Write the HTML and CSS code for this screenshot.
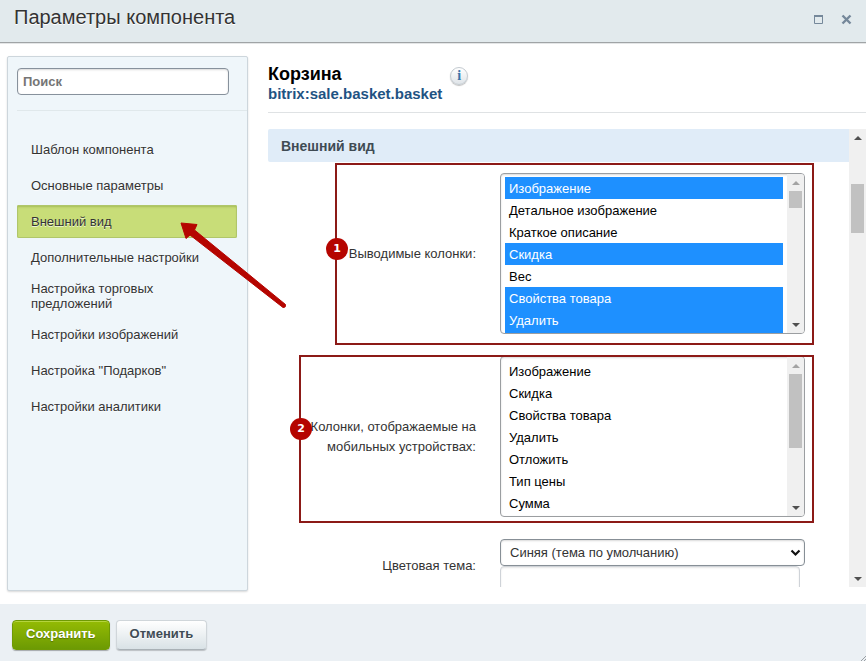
FILE: index.html
```
<!DOCTYPE html>
<html lang="ru">
<head>
    <meta charset="UTF-8">
    <meta name="viewport" content="width=device-width, initial-scale=1.0">
    <title>Параметры компонента</title>
    <link rel="stylesheet" href="styles.css">
</head>
<body>
    <div class="dialog">
        <header class="dialog-header">
            <h1>Параметры компонента</h1>
            <div class="window-controls">
                <button type="button" aria-label="Развернуть">
                    <svg width="11" height="11" viewBox="0 0 11 11"><path d="M1.5 1.5h8v8h-8z" fill="none" stroke="#75889a"/><path d="M1 1h9v2H1z" fill="#75889a"/></svg>
                </button>
                <button type="button" aria-label="Закрыть">
                    <svg width="11" height="11" viewBox="0 0 11 11"><path d="M1.5 1.5l8 8M9.5 1.5l-8 8" stroke="#75889a" stroke-width="2.4"/></svg>
                </button>
            </div>
        </header>

        <div class="dialog-body">
            <aside class="sidebar">
                <div class="search">
                    <input type="text" placeholder="Поиск" aria-label="Поиск">
                </div>
                <nav class="menu">
                    <a href="#">Шаблон компонента</a>
                    <a href="#">Основные параметры</a>
                    <a href="#" class="active">Внешний вид
                        <svg class="arrow" width="110" height="90" viewBox="0 0 110 90"><path d="M1 1L17 2.500 14.500 8 105.500 82.500Q106 86 103 85.500L10 13 6 16.500Z" fill="#b50500" stroke="#b50500" stroke-width="1" stroke-linejoin="round"/></svg>
                    </a>
                    <a href="#">Дополнительные настройки</a>
                    <a href="#">Настройка торговых предложений</a>
                    <a href="#">Настройки изображений</a>
                    <a href="#">Настройка "Подарков"</a>
                    <a href="#">Настройки аналитики</a>
                </nav>
            </aside>

            <main class="content">
                <div class="component-info">
                    <div>
                        <h2>Корзина</h2>
                        <p>bitrix:sale.basket.basket</p>
                    </div>
                    <button type="button" class="info-btn" aria-label="Справка">i</button>
                </div>

                <div class="scroll-area">
                    <form class="params">
                        <h3>Внешний вид</h3>

                        <div class="param">
                            <label for="columns">Выводимые колонки:</label>
                            <div class="listbox">
                                <select id="columns" multiple>
                                    <option selected>Изображение</option>
                                    <option>Детальное изображение</option>
                                    <option>Краткое описание</option>
                                    <option selected>Скидка</option>
                                    <option>Вес</option>
                                    <option selected>Свойства товара</option>
                                    <option selected>Удалить</option>
                                    <option selected>Отложить</option>
                                </select>
                                <div class="scrollbar">
                                    <i class="up off"></i>
                                    <div class="track"><b class="thumb short"></b></div>
                                    <i class="down"></i>
                                </div>
                            </div>
                            <div class="callout first"><span>1</span></div>
                        </div>

                        <div class="param">
                            <label for="mobile-columns">Колонки, отображаемые на мобильных устройствах:</label>
                            <div class="listbox">
                                <select id="mobile-columns" multiple>
                                    <option>Изображение</option>
                                    <option>Скидка</option>
                                    <option>Свойства товара</option>
                                    <option>Удалить</option>
                                    <option>Отложить</option>
                                    <option>Тип цены</option>
                                    <option>Сумма</option>
                                </select>
                                <div class="scrollbar">
                                    <i class="up off"></i>
                                    <div class="track"><b class="thumb long"></b></div>
                                    <i class="down"></i>
                                </div>
                            </div>
                            <div class="callout second"><span>2</span></div>
                        </div>

                        <div class="param">
                            <label for="theme">Цветовая тема:</label>
                            <div class="theme">
                                <div class="dropdown">
                                    <select id="theme">
                                        <option>Синяя (тема по умолчанию)</option>
                                    </select>
                                    <svg width="11" height="8" viewBox="0 0 11 8"><path d="M1.500 1.500l4 4 4-4" fill="none" stroke="#111" stroke-width="2.200"/></svg>
                                </div>
                                <input type="text" aria-label="Другая тема">
                            </div>
                        </div>
                    </form>
                    <div class="scrollbar">
                        <i class="up"></i>
                        <div class="track"><b class="thumb page"></b></div>
                        <i class="down"></i>
                    </div>
                </div>
            </main>
        </div>

        <footer class="dialog-footer">
            <button type="button" class="btn btn-save">Сохранить</button>
            <button type="button" class="btn btn-cancel">Отменить</button>
            <svg class="grip" width="5" height="5" viewBox="0 0 5 5"><path d="M0 5L5 0M3 5L5 3" stroke="#9a9fa3"/></svg>
        </footer>
    </div>
</body>
</html>
```
FILE: styles.css
```
* {
    box-sizing: border-box;
    margin: 0;
    padding: 0;
}

body {
    font-family: "Liberation Sans", Arial, sans-serif;
    font-size: 13px;
    color: #333;
    background: white;
}

button, input, select {
    font: inherit;
    color: inherit;
}

.dialog {
    display: flex;
    flex-direction: column;
    height: 100vh;
}

/* Header */
.dialog-header {
    display: flex;
    justify-content: space-between;
    height: 43px;
    padding: 5px 14px 0;
    background: #e2eaed;
    border-bottom: 1px solid #a0a4a6;
    box-shadow: 0 1px 0 #e4e6e7;
}

.dialog-header h1 {
    font-size: 20px;
    font-weight: normal;
    line-height: 24px;
    text-shadow: 0 1px 0 white;
}

.window-controls {
    display: flex;
    align-items: flex-start;
    gap: 17px;
    padding-top: 9px;
}

.window-controls button {
    width: 11px;
    height: 11px;
    border: none;
    background: none;
}

.window-controls svg {
    display: block;
}

.dialog-body {
    display: flex;
    flex: 1;
    gap: 20px;
    min-height: 0;
    padding: 13px 0 13px 7px;
}

/* Sidebar */
.sidebar {
    flex: none;
    width: 241px;
    padding-left: 9px;
    background: #eff6fa;
    border: 1px solid #cdd6dc;
    border-radius: 2px;
    box-shadow: 0 1px 2px rgba(0, 0, 0, 0.15);
}

.search {
    padding: 11px 18px 15px 0;
    border-bottom: 1px solid #e0e8eb;
}

.search input {
    display: block;
    width: 100%;
    height: 27px;
    padding: 0 5px;
    background: white;
    border: 1px solid #87919c;
    border-radius: 4px;
    box-shadow: inset 0 1px 2px rgba(0, 0, 0, 0.15);
    font-weight: bold;
}

.search input::placeholder {
    color: #757575;
    opacity: 1;
}

.menu {
    display: flex;
    flex-direction: column;
    gap: 3px;
    padding: 22px 10px 0 0;
}

.menu a {
    position: relative;
    display: flex;
    align-items: center;
    min-height: 33px;
    padding: 4px 14px;
    border-radius: 2px;
    color: #333;
    line-height: 15px;
    text-decoration: none;
    text-shadow: 0 1px 0 rgba(255, 255, 255, 0.7);
}

.menu a.active {
    background: #c8dd78;
    box-shadow: inset 0 0 0 1px #b0c66a, inset 0 2px 2px rgba(90, 120, 20, 0.3);
}

.arrow {
    position: absolute;
    left: 163px;
    top: 17px;
    z-index: 5;
}

/* Content */
.content {
    display: flex;
    flex: 1;
    flex-direction: column;
    min-width: 0;
    margin-bottom: 4px;
}

.component-info {
    display: flex;
    align-items: flex-start;
    gap: 8px;
    height: 57px;
    padding-top: 8px;
    border-bottom: 1px solid #dfe2e4;
}

.component-info h2 {
    color: black;
    font-size: 18px;
    line-height: 20px;
}

.component-info p {
    color: #1f5383;
    font-size: 15px;
    font-weight: bold;
    line-height: 20px;
}

.info-btn {
    width: 18px;
    height: 18px;
    margin-top: 3px;
    border: 1px solid #c3cad0;
    border-radius: 50%;
    background: linear-gradient(white, #dfe4e8);
    box-shadow: 0 1px 1px rgba(0, 0, 0, 0.25);
    color: #3a73a8;
    font-family: "Liberation Serif", serif;
    font-size: 14px;
    font-weight: bold;
    line-height: 14px;
}

.scroll-area {
    display: flex;
    flex: 1;
    min-height: 0;
    margin-top: 16px;
    overflow: hidden;
}

.params {
    display: flex;
    flex: 1;
    flex-direction: column;
    gap: 22px;
}

.params h3 {
    margin-bottom: -11px;
    padding: 1px 0 0 13px;
    background: #e0ecf8;
    border-radius: 2px 0 0 2px;
    color: #3f4b54;
    font-size: 14px;
    line-height: 32px;
}

.param {
    position: relative;
    display: grid;
    grid-template-columns: 208px 1fr;
    align-items: center;
    gap: 24px;
    padding-right: 44px;
}

.param label {
    line-height: 20px;
    text-align: right;
}

.listbox {
    display: flex;
    height: 161px;
    border: 1px solid #9b9ea1;
    border-radius: 4px;
    box-shadow: inset 0 1px 2px rgba(0, 0, 0, 0.15);
    overflow: hidden;
}

.listbox select {
    flex: 1;
    min-width: 0;
    padding: 3px 4px;
    background: none;
    border: none;
    outline: none;
    color: black;
    scrollbar-width: none;
}

.listbox option {
    height: 22px;
    padding: 4px 4px 0;
}

.listbox option:checked {
    background: #1e90ff linear-gradient(#1e90ff, #1e90ff);
    color: white;
}

.theme input {
    display: block;
    width: calc(100% - 5px);
    height: 27px;
    border: 1px solid #cfd3d8;
    border-radius: 4px;
    box-shadow: inset 0 1px 2px rgba(0, 0, 0, 0.1);
}

.dropdown {
    position: relative;
}

.dropdown select {
    display: block;
    width: 100%;
    height: 27px;
    padding: 0 24px 0 9px;
    appearance: none;
    background: white;
    border: 1px solid #878f96;
    border-radius: 4px;
    box-shadow: inset 0 1px 2px rgba(0, 0, 0, 0.15);
}

.dropdown svg {
    position: absolute;
    right: 4px;
    top: 10px;
    pointer-events: none;
}

/* Scrollbars */
.scrollbar {
    display: flex;
    flex: none;
    flex-direction: column;
    width: 17px;
    background: #f0f0f0;
}

.scrollbar i {
    display: flex;
    flex: none;
    align-items: center;
    justify-content: center;
    height: 17px;
}

.scrollbar i::before {
    content: "";
    border: 4px solid transparent;
}

.scrollbar .up::before {
    border-top-width: 0;
    border-bottom-color: #505050;
}

.scrollbar .down::before {
    border-bottom-width: 0;
    border-top-color: #505050;
}

.scrollbar .off::before {
    border-bottom-color: #a3a3a3;
}

.track {
    flex: 1;
    padding: 0 2px;
}

.thumb {
    display: block;
    background: #c1c1c1;
}

.thumb.short {
    height: 17px;
}

.thumb.long {
    height: 74px;
}

.thumb.page {
    height: 49px;
    margin-top: 38px;
}

/* Numbered callouts over the form */
.callout {
    position: absolute;
    right: 35px;
    border: 2px solid #8c1a17;
    pointer-events: none;
}

.callout.first {
    left: 67px;
    top: -10px;
    bottom: -11px;
}

.callout.second {
    left: 31px;
    top: -1px;
    bottom: -6px;
}

.callout span {
    position: absolute;
    left: -11px;
    top: 73px;
    width: 22px;
    height: 22px;
    border-radius: 50%;
    background: #b50500;
    color: white;
    font-family: "DejaVu Sans", sans-serif;
    font-size: 11px;
    font-weight: bold;
    line-height: 22px;
    text-align: center;
}

.callout.second span {
    top: 61px;
}

/* Footer */
.dialog-footer {
    position: relative;
    display: flex;
    gap: 6px;
    padding: 16px 12px 11px;
    background: #ebf0f4;
}

.btn {
    height: 30px;
    padding: 0 13px 3px;
    border-radius: 4px;
    font-weight: bold;
}

.btn-save {
    border: 1px solid #6f9a04;
    background: linear-gradient(#94bb03, #6c9a03);
    box-shadow: inset 0 1px 0 #b5d43c, 0 1px 1px rgba(0, 0, 0, 0.3);
    color: white;
    text-shadow: 0 1px 1px rgba(0, 0, 0, 0.3);
}

.btn-cancel {
    border: 1px solid #d0d6da;
    border-bottom-color: #a9b1b6;
    background: linear-gradient(white, #d9e2e6);
    box-shadow: 0 1px 1px rgba(0, 0, 0, 0.2);
    color: #3f4b54;
    text-shadow: 0 1px 0 white;
}

.grip {
    position: absolute;
    right: 0;
    bottom: 0;
}
```
